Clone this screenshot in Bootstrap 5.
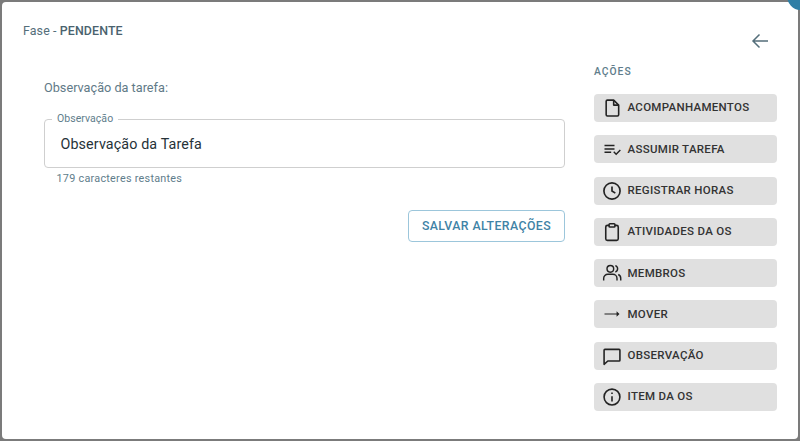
<!DOCTYPE html>
<html lang="pt-BR">
<head>
<meta charset="utf-8">
<title>Observação da Tarefa</title>
<link href="https://cdn.jsdelivr.net/npm/bootstrap@5.3.0/dist/css/bootstrap.min.css" rel="stylesheet">
<style>
html,body{height:100%;overflow:hidden}
body{background:#7b7b7b;font-family:Roboto,"Liberation Sans",sans-serif;padding:2px}
.sheet{position:relative;height:437px;background:#fff;border-radius:4px}
.dot{position:absolute;right:-17px;top:-20px;width:28px;height:28px;border-radius:50%;background:#2f7fa6}
.main-col{width:590px;padding:21px 0 0 21px}
.side-col{width:206px;padding-left:2px}
.fase{font-size:12.4px;line-height:16px;color:#546e7a;letter-spacing:.12px}
.fase b{font-weight:500;color:#4a626e}
.obs-title{font-size:12.7px;line-height:18px;color:#5f7a87;margin:40px 0 0 21px}
.field{position:relative;margin:22px 0 0 21px;width:521px;height:49px;border:1px solid #cfcfcf;border-radius:4px;padding:14px 15.5px 0;font-size:14.3px;line-height:20px;color:#263238;letter-spacing:.12px}
.field-label{position:absolute;left:7px;top:-8px;background:#fff;padding:0 5px;font-size:10.5px;line-height:14px;color:#607d8b;letter-spacing:.05px}
.hint{margin:3px 0 0 33.500px;font-size:10.8px;line-height:16px;color:#607d8b;letter-spacing:.27px}
.save-wrap{width:521px;margin:23px 0 0 21px}
.save-btn{width:157px;height:32px;padding:0;border:1px solid #9cc6db;border-radius:4px;background:#fff;color:#3f83a6;font-size:12.3px;font-weight:500;letter-spacing:.42px;line-height:30px}
.back-btn{width:24px;height:24px;margin:26px 0 0 154px;color:#546e7a}
.acoes{font-size:10.3px;font-weight:500;letter-spacing:1px;line-height:14px;color:#607d8b;margin:13px 0 15px 0}
.act-list{width:183px;gap:13.3px}
.act-btn{height:28px;background:#e0e0e0;border:0;border-radius:4px;padding:0 0 0 8px;font-size:11.5px;font-weight:500;letter-spacing:.3px;color:#333;text-align:left;gap:5.500px}
.act-btn svg{width:20px;height:20px;flex:none}
</style>
</head>
<body>
<div class="sheet d-flex">
  <span class="dot"></span>
  <div class="main-col">
    <div class="fase">Fase - <b>PENDENTE</b></div>
    <div class="obs-title">Observação da tarefa:</div>
    <div class="field"><span class="field-label">Observação</span>Observação da Tarefa</div>
    <div class="hint">179 caracteres restantes</div>
    <div class="save-wrap d-flex justify-content-end"><button class="save-btn" type="button">SALVAR ALTERAÇÕES</button></div>
  </div>
  <div class="side-col">
    <div class="back-btn"><svg width="24" height="24" viewBox="0 0 24 24" fill="none" stroke="currentColor" stroke-width="1.500"><path d="M20 12H5M11.500 5.500 5 12l6.500 6.500"/></svg></div>
    <div class="acoes">AÇÕES</div>
    <div class="act-list d-flex flex-column">
      <button class="act-btn d-flex align-items-center" type="button"><svg viewBox="0 0 24 24" fill="none" stroke="#222" stroke-width="1.900" stroke-linejoin="round"><path d="M6.500 2.500h7.500l6 6v11.500a1.500 1.500 0 0 1-1.500 1.500h-12a1.500 1.500 0 0 1-1.500-1.500V4a1.500 1.500 0 0 1 1.500-1.500z"/><path d="M14 2.500V8.500h6"/></svg>ACOMPANHAMENTOS</button>
      <button class="act-btn d-flex align-items-center" type="button"><svg viewBox="0 0 24 24" fill="#222"><path d="M3 7h12v1.800H3zM3 11h12v1.800H3zM3 15h8v1.800H3z"/><path d="m13.500 16 1.200-1.200 2.300 2.300 4.400-4.400 1.200 1.200-5.600 5.600z"/></svg>ASSUMIR TAREFA</button>
      <button class="act-btn d-flex align-items-center" type="button"><svg viewBox="0 0 24 24" fill="none" stroke="#222" stroke-width="2"><circle cx="12" cy="12" r="9.700"/><path d="M12 6.500V12l4 2.500"/></svg>REGISTRAR HORAS</button>
      <button class="act-btn d-flex align-items-center" type="button"><svg viewBox="0 0 24 24" fill="none" stroke="#222" stroke-width="1.900"><rect x="4.500" y="4" width="15" height="18" rx="2"/><rect x="8.500" y="2" width="7" height="4" rx="1" fill="#e0e0e0"/></svg>ATIVIDADES DA OS</button>
      <button class="act-btn d-flex align-items-center" type="button"><svg viewBox="0 0 24 24" fill="none" stroke="#222" stroke-width="1.700"><circle cx="10" cy="7" r="4"/><path d="M2 21v-2.500a5 5 0 0 1 5-5h6a5 5 0 0 1 5 5V21M16 3.200a4 4 0 0 1 0 7.600M19.500 13.800A5 5 0 0 1 22.500 18.500V21"/></svg>MEMBROS</button>
      <button class="act-btn d-flex align-items-center" type="button"><svg viewBox="0 0 24 24" fill="#222"><path d="M3 11.300h14.500V8.800L21 12l-3.500 3.200v-2.500H3z"/></svg>MOVER</button>
      <button class="act-btn d-flex align-items-center" type="button"><svg viewBox="0 0 24 24" fill="none" stroke="#222" stroke-width="1.900" stroke-linejoin="round"><path d="M3.500 4h17a1 1 0 0 1 1 1v12a1 1 0 0 1-1 1H7l-4.500 4V5a1 1 0 0 1 1-1z"/></svg>OBSERVAÇÃO</button>
      <button class="act-btn d-flex align-items-center" type="button"><svg viewBox="0 0 24 24" fill="none" stroke="#222" stroke-width="1.900"><circle cx="12" cy="12" r="9.500"/><path d="M12 11v6.500M12 6.500v2"/></svg>ITEM DA OS</button>
    </div>
  </div>
</div>
<script src="https://cdn.jsdelivr.net/npm/bootstrap@5.3.0/dist/js/bootstrap.bundle.min.js"></script>
</body>
</html>
